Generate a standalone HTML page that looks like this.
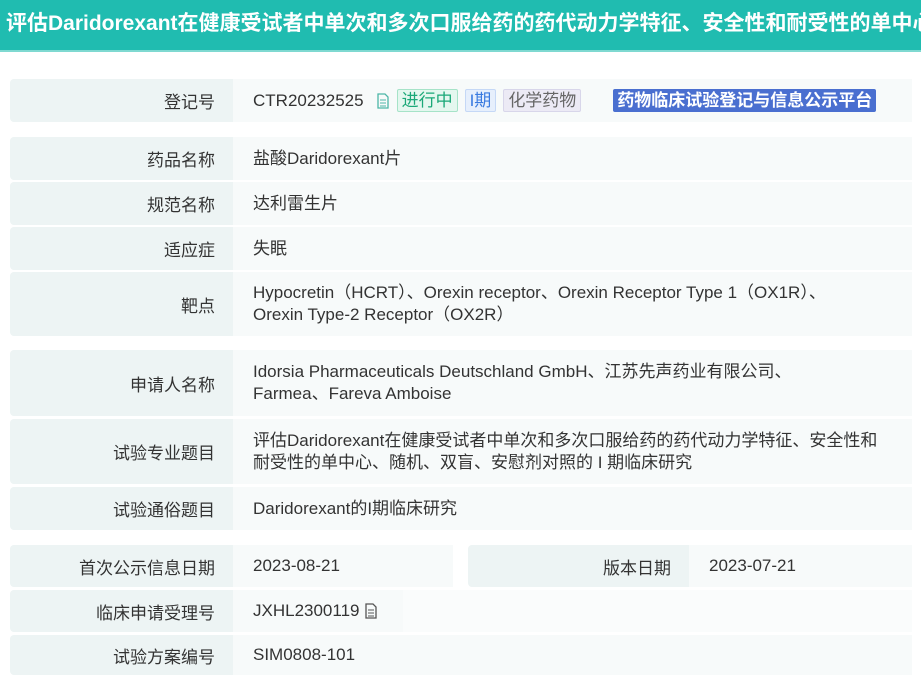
<!DOCTYPE html>
<html><head><meta charset="utf-8"><style>
*{margin:0;padding:0;box-sizing:border-box}
body{width:921px;height:673px;overflow:hidden;background:#fff;font-family:"Liberation Sans","Noto Sans CJK SC",sans-serif;color:#333;font-size:17px;position:relative}
.hd{position:absolute;left:0;top:0;width:921px;height:52px;background:#20bcb0;color:#fff;font-size:21px;font-weight:bold;line-height:48px;padding-left:6px;white-space:nowrap;overflow:hidden;border-bottom:2px solid #7fd9d1}
.c{position:absolute;display:flex;align-items:center;white-space:nowrap}
.l{background:#edf4f4;justify-content:flex-end;padding-right:18px;border-radius:4px 0 0 4px}
.v{background:#f7fafa;padding-left:20px;line-height:22px}
.tag{display:inline-block;font-size:17px;line-height:21px;padding:0 4px;margin-left:7px;border-radius:2px}
</style></head><body>
<div class="hd">评估Daridorexant在健康受试者中单次和多次口服给药的药代动力学特征、安全性和耐受性的单中心、随机、双盲</div>

<div class="c l" style="left:10px;top:79px;width:223px;height:43px">登记号</div>
<div class="c v" style="left:233px;top:79px;width:679px;height:43px">CTR20232525
<svg width="14" height="16" style="margin-left:12px" viewBox="0 0 14 16"><path d="M2 1h7l3 3v11H2z" fill="none" stroke="#4db6a8" stroke-width="1.3"/><path d="M4 7h6M4 10h6M4 13h6" stroke="#4db6a8"/></svg>
<span class="tag" style="color:#1aa878;background:#e4f7ef;border:1px solid #a6e3c8">进行中</span>
<span class="tag" style="color:#3a7be0;background:#e6effc;border:1px solid #c5d8f6">I期</span>
<span class="tag" style="color:#666;background:#eceaf5;border:1px solid #d8d6ea">化学药物</span>
<span class="tag" style="margin-left:32px;color:#fff;background:#4a6fd0;font-weight:bold;padding:1px 4px">药物临床试验登记与信息公示平台</span></div>

<div class="c l" style="left:10px;top:137px;width:223px;height:43px">药品名称</div>
<div class="c v" style="left:233px;top:137px;width:679px;height:43px">盐酸Daridorexant片</div>
<div class="c l" style="left:10px;top:182px;width:223px;height:43px">规范名称</div>
<div class="c v" style="left:233px;top:182px;width:679px;height:43px">达利雷生片</div>
<div class="c l" style="left:10px;top:227px;width:223px;height:43px">适应症</div>
<div class="c v" style="left:233px;top:227px;width:679px;height:43px">失眠</div>
<div class="c l" style="left:10px;top:272px;width:223px;height:64px">靶点</div>
<div class="c v" style="left:233px;top:272px;width:679px;height:64px">Hypocretin（HCRT）、Orexin receptor、Orexin Receptor Type 1（OX1R）、<br>Orexin Type-2 Receptor（OX2R）</div>

<div class="c l" style="left:10px;top:350px;width:223px;height:66px">申请人名称</div>
<div class="c v" style="left:233px;top:350px;width:679px;height:66px">Idorsia Pharmaceuticals Deutschland GmbH、江苏先声药业有限公司、<br>Farmea、Fareva Amboise</div>
<div class="c l" style="left:10px;top:419px;width:223px;height:65px">试验专业题目</div>
<div class="c v" style="left:233px;top:419px;width:679px;height:65px">评估Daridorexant在健康受试者中单次和多次口服给药的药代动力学特征、安全性和<br>耐受性的单中心、随机、双盲、安慰剂对照的 I 期临床研究</div>
<div class="c l" style="left:10px;top:487px;width:223px;height:43px">试验通俗题目</div>
<div class="c v" style="left:233px;top:487px;width:679px;height:43px">Daridorexant的I期临床研究</div>

<div class="c l" style="left:10px;top:545px;width:223px;height:42px">首次公示信息日期</div>
<div class="c v" style="left:233px;top:545px;width:220px;height:42px">2023-08-21</div>
<div class="c l" style="left:468px;top:545px;width:221px;height:42px">版本日期</div>
<div class="c v" style="left:689px;top:545px;width:223px;height:42px">2023-07-21</div>
<div class="c l" style="left:10px;top:590px;width:223px;height:42px">临床申请受理号</div>
<div class="c v" style="left:233px;top:590px;width:170px;height:42px">JXHL2300119
<svg width="12" height="16" style="margin-left:5px" viewBox="0 0 12 16"><path d="M1 1h7l3 3v11H1z" fill="none" stroke="#555" stroke-width="1.3"/><path d="M3 7h6M3 10h6M3 13h6" stroke="#555"/></svg></div>
<div class="c" style="left:403px;top:590px;width:509px;height:42px;background:#fafcfc"></div>
<div class="c l" style="left:10px;top:635px;width:223px;height:40px">试验方案编号</div>
<div class="c v" style="left:233px;top:635px;width:679px;height:40px">SIM0808-101</div>
</body></html>
